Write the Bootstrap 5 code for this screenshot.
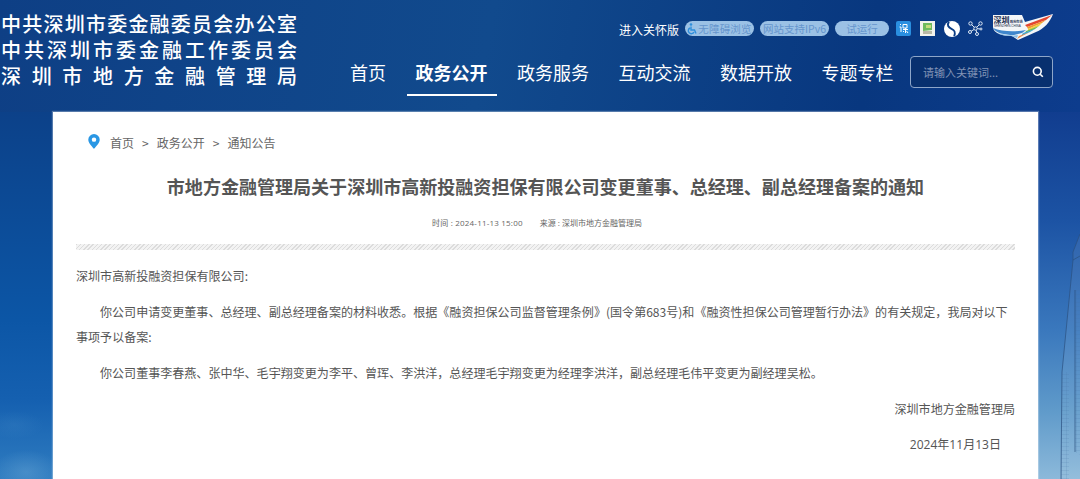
<!DOCTYPE html>
<html lang="zh-CN">
<head>
    <meta charset="UTF-8">
    <meta name="viewport" content="width=device-width, initial-scale=1.0">
    <title>通知公告</title>
    <link href="https://cdn.jsdelivr.net/npm/bootstrap@5.3.0/dist/css/bootstrap.min.css" rel="stylesheet">
    <style>
        html, body { height: 479px; overflow: hidden; }
        body {
            font-family: "Noto Sans CJK SC", "Noto Sans", sans-serif;
            position: relative;
            background-color: #0c4189;
            background-image:
                radial-gradient(ellipse 34px 22px at 26px 472px, rgba(110,170,215,.4), rgba(110,170,215,0)),
                radial-gradient(ellipse 30px 14px at 14px 425px, rgba(70,140,200,.22), rgba(70,140,200,0)),
                linear-gradient(180deg, #0c4189 112px, #0c56a6 320px, #1560b0 400px, #2f7cc0 479px),
                linear-gradient(180deg, #113d8f 112px, #1c53a4 220px, #3a78bd 330px, #5f9aca 410px, #8cb9da 479px);
            background-repeat: no-repeat;
            background-position: 0 0, 0 0, 0 0, 100% 0;
            background-size: 53px 100%, 53px 100%, 53px 100%, 42px 100%;
        }
        .tower { position: absolute; left: 1056px; top: 230px; }
        .top-head { position: relative; height: 112px; background: linear-gradient(100deg, #0e3f85 0%, #114a8d 45%, #08377f 80%, #0d3c8d 100%); }
        .site-name { width: 297px; margin-top: 12px; padding-left: 1px; color: #fff; font-family: "Liberation Sans", "Noto Sans CJK SC", sans-serif; font-size: 20px; font-weight: 500; line-height: 26px; }
        .site-name div { text-align: justify; text-align-last: justify; height: 26px; white-space: nowrap; }
        .head-right { width: 702px; margin-right: 27px; margin-left: 54px; }
        .tool-row { height: 56px; padding-top: 21px; font-size: 12px; line-height: 18px; }
        .care-link { margin-right: 6px; color: #fff; white-space: nowrap; }
        .pill-link { flex: none; height: 15px; border-radius: 8px; background: #9bc1e5; color: #6595cd; font-size: 10.5px; line-height: 15px; text-align: center; white-space: nowrap; }
        .pill-a { width: 69px; margin-right: 6px; letter-spacing: .2px; }
        .pill-b { width: 69px; margin-right: 6px; }
        .pill-c { width: 54px; margin-right: 7px; }
        .tool-icon { display: block; flex: none; margin-right: 9px; }
        .tool-icon.tight { margin-right: 8px; }
        .site-logo { display: block; flex: none; margin-top: -7px; }
        .nav-row { height: 40px; }
        .main-nav { gap: 11.5px; margin-left: -10px; flex-wrap: nowrap; }
        .main-nav a { display: block; flex: none; padding: 0 9px; height: 40px; color: #fff; font-size: 18px; line-height: 32px; text-decoration: none; white-space: nowrap; }
        .main-nav a.on { font-weight: 700; border-bottom: 2px solid #fff; }
        .search-box { width: 143px; height: 32px; padding-right: 8px; border: 1px solid #8ea6c9; border-radius: 4px; background: #08306f; }
        .search-box input { width: 110px; padding: 0 0 0 12px; border: 0; outline: 0; background: transparent; color: #fff; font-size: 11px; }
        .search-box input::placeholder { color: #8193b5; opacity: 1; }
        .page-sheet { position: relative; width: 985px; height: 367px; margin-left: 53px; padding: 0 23px; background: #fff; color: #555; overflow: hidden; box-shadow: 0 0 1px 1px rgba(255,255,255,.3); }
        .crumbs { height: 62px; padding-left: 12px; padding-top: 22px; font-size: 12px; line-height: 18px; color: #666; }
        .crumbs span { margin-right: 8px; }
        .crumbs svg { margin-right: 10px; flex: none; }
        .doc-title { margin: 0; font-size: 18.04px; font-weight: 700; line-height: 24px; color: #555; text-align: center; white-space: nowrap; }
        .doc-meta { margin-top: 19px; height: 11px; padding-right: 17px; gap: 17px; font-family: "Open Sans", "Noto Sans CJK SC", sans-serif; font-size: 8px; line-height: 11px; color: #666; }
        .meta-time { letter-spacing: .2px; }
        .hatch { height: 6px; margin-top: 16px; background: repeating-linear-gradient(135deg, #dcdcdc 0, #dcdcdc 1px, #f3f3f3 1px, #f3f3f3 3px); }
        .doc-body { padding-top: 13px; font-size: 12.05px; line-height: 25px; color: #555; }
        .doc-body p { margin: 0 0 11px; }
        .doc-body .ind { text-indent: 24px; }
        .doc-body .date-line { padding-right: 14px; font-family: "Open Sans", "Noto Sans CJK SC", sans-serif; }
        .logo-cn { font-family: "Noto Sans CJK SC", sans-serif; font-weight: 700; fill: #1e2f4f; }
    </style>
</head>
<body>
    <svg class="tower" width="24" height="249" viewBox="0 0 24 249">
        <defs>
            <pattern id="floors" width="5" height="4" patternUnits="userSpaceOnUse">
                <path d="M0 0H5M0 0V4" stroke="#3f6b9b" stroke-width=".5" stroke-opacity=".55" fill="none"/>
            </pattern>
        </defs>
        <path d="M24 4L17 22V30L6 142L5 249H24Z" fill="#fff" fill-opacity=".07"/>
        <path d="M6 142L5 249H13V142Z" fill="url(#floors)"/>
        <path d="M19 60H24V225L19 222Z" fill="url(#floors)"/>
        <path d="M24 4L17 22V30L6 142L5 249M17 30L24 26M19 60V222" fill="none" stroke="#2b507f" stroke-width=".7"/>
    </svg>

    <div class="top-head d-flex">
        <div class="site-name flex-shrink-0">
            <div>中共深圳市委金融委员会办公室</div>
            <div>中共深圳市委金融工作委员会</div>
            <div>深圳市地方金融管理局</div>
        </div>
        <div class="head-right">
            <div class="tool-row d-flex justify-content-end align-items-start">
                <a class="care-link text-decoration-none">进入关怀版</a>
                <div class="pill-link pill-a d-flex justify-content-center align-items-center">
                    <svg width="11" height="12" viewBox="0 0 11 12"><circle cx="4" cy="1.5" r="1.3" fill="#2f8fdc"/><path d="M4 3.5V7H7.5L9 10.5M3 5A3 3 0 1 0 7 9" fill="none" stroke="#2f8fdc" stroke-width="1.4"/></svg>
                    <span>无障碍浏览</span>
                </div>
                <div class="pill-link pill-b">网站支持IPv6</div>
                <div class="pill-link pill-c">试运行</div>
                <svg class="tool-icon" width="15" height="15" viewBox="0 0 15 15"><rect width="15" height="15" rx="2" fill="#2a8fe0"/><path d="M4 3.5H5M3.5 6H5V11M7 3.5H11V7H7ZM7 8.5H12M9.5 7V12M7 11L8 10M12 12L10.5 10" stroke="#fff" stroke-width="1" fill="none"/></svg>
                <svg class="tool-icon" width="15" height="15" viewBox="0 0 15 15"><rect width="15" height="15" fill="#f2f2ec"/><path d="M3 2H12V9L3 10Z" fill="#6fbb5e"/><path d="M3 10H12V13H3Z" fill="#b9b9a8"/><path d="M6 4H11V7H6Z" fill="#c6dc7c"/></svg>
                <svg class="tool-icon tight" width="16" height="16" viewBox="0 0 16 16"><circle cx="8" cy="8" r="8" fill="#fff"/><path d="M5 .8C2.5 4 4.5 6.5 7.5 7.8S11.8 10.8 10.2 15.2" fill="none" stroke="#0a3c84" stroke-width="1.9"/></svg>
                <svg class="tool-icon" width="15" height="15" viewBox="0 0 15 15" fill="none" stroke="#dfe9f5" stroke-width="1"><circle cx="2.5" cy="2.5" r="1.7"/><circle cx="12.5" cy="2.5" r="1.7"/><circle cx="7.5" cy="7.5" r="1.7"/><circle cx="2" cy="11" r="1.5"/><circle cx="9" cy="13" r="1.5"/><circle cx="13" cy="8" r="1"/><path d="M3.7 3.7L6.3 6.3M11.3 3.7L8.7 6.3M6 8.5L3.2 10.2M8 9L8.7 11.5M9.2 7.6L12 8"/></svg>
                <svg class="site-logo" width="61" height="27" viewBox="0 0 61 27">
                    <path d="M1 1H30L33 8L61 0C58 8 52 15 44 18L26 26L20 22C10 22 1 19 1 13Z" fill="#f4f6f8"/>
                    <path d="M1 14C10 18 24 18 34 16L30 19L22 21C12 21 4 19 1 14Z" fill="#3f86cc"/>
                    <path d="M5 19C12 21 22 22 26 21L25 24L19 22C13 22 8 21 5 19Z" fill="#8dbfe6"/>
                    <path d="M33 11L60 1L54 6L35 13Z" fill="#e4462f"/>
                    <path d="M35 13L54 6L50 9L36 15Z" fill="#f39a2d"/>
                    <path d="M36 15L50 9L47 12L36 17Z" fill="#f4d03a"/>
                    <path d="M34 17L47 12L43 15L33 19Z" fill="#6cbb55"/>
                    <path d="M31 19L43 15L38 18L29 22Z" fill="#3fa8d6"/>
                    <path d="M27 22L38 18L32 21L25 25Z" fill="#e98b4a"/>
                    <text class="logo-cn" x="1.5" y="9" font-size="8">深圳</text>
                    <text class="logo-cn" x="18" y="9" font-size="3.2">政府在线</text>
                    <text x="2" y="13" font-size="3" font-family="Liberation Sans, sans-serif" fill="#1e2f4f">SHENZHEN.CHINA</text>
                </svg>
            </div>
            <div class="nav-row d-flex">
                <nav class="main-nav d-flex flex-grow-1">
                    <a href="#">首页</a>
                    <a href="#" class="on">政务公开</a>
                    <a href="#">政务服务</a>
                    <a href="#">互动交流</a>
                    <a href="#">数据开放</a>
                    <a href="#">专题专栏</a>
                </nav>
                <div class="search-box d-flex align-items-center justify-content-between flex-shrink-0">
                    <input type="text" placeholder="请输入关键词...">
                    <svg width="12" height="12" viewBox="0 0 12 12" fill="none" stroke="#fff" stroke-width="1.6"><circle cx="5.3" cy="5.3" r="3.9"/><path d="M8.2 8.2L10.8 10.8"/></svg>
                </div>
            </div>
        </div>
    </div>

    <div class="page-sheet">
        <div class="crumbs d-flex align-items-start">
            <svg width="12" height="15" viewBox="0 0 13 16"><path d="M6.5 0A6.2 6.2 0 0 0 .3 6.2C.3 10 6.5 16 6.5 16S12.7 10 12.7 6.2A6.2 6.2 0 0 0 6.5 0Z" fill="#2a97e4"/><circle cx="6.5" cy="6" r="2.4" fill="#fff"/></svg>
            <span>首页</span><span>&gt;</span><span>政务公开</span><span>&gt;</span><span>通知公告</span>
        </div>
        <h1 class="doc-title">市地方金融管理局关于深圳市高新投融资担保有限公司变更董事、总经理、副总经理备案的通知</h1>
        <div class="doc-meta d-flex justify-content-center">
            <span class="meta-time">时间 : 2024-11-13 15:00</span>
            <span>来源 : 深圳市地方金融管理局</span>
        </div>
        <div class="hatch"></div>
        <div class="doc-body">
            <p>深圳市高新投融资担保有限公司:</p>
            <p class="ind">你公司申请变更董事、总经理、副总经理备案的材料收悉。根据《融资担保公司监督管理条例》(国令第683号)和《融资性担保公司管理暂行办法》的有关规定，我局对以下事项予以备案:</p>
            <p class="ind">你公司董事李春燕、张中华、毛宇翔变更为李平、曾珲、李洪洋，总经理毛宇翔变更为经理李洪洋，副总经理毛伟平变更为副经理吴松。</p>
            <p class="text-end">深圳市地方金融管理局</p>
            <p class="text-end date-line">2024年11月13日</p>
        </div>
    </div>
</body>
</html>
